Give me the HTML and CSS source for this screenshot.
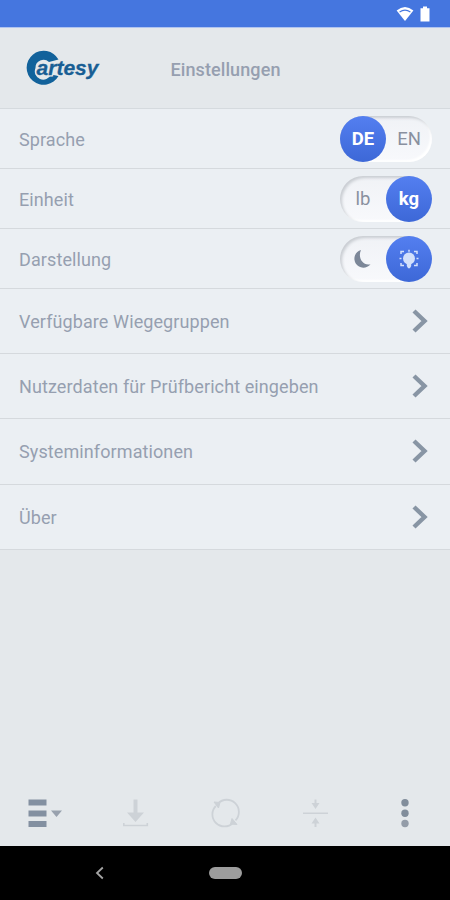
FILE: index.html
```html
<!DOCTYPE html>
<html lang="de">
<head>
<meta charset="utf-8">
<title>Einstellungen</title>
<link rel="stylesheet" href="styles.css">
</head>
<body>
<div class="status">
  <svg width="18" height="16" viewBox="0 0 18 16"><path d="M0.6 4.6Q9-2.4 17.4 4.6L9 15Z" fill="#fff"/><path d="M3.6 5.9Q9 2.4 14.4 5.9" fill="none" stroke="#4576df" stroke-width="1.2"/></svg>
  <svg width="10" height="16" viewBox="0 0 10 16"><path d="M3 0.5h4v1.7h2.5v13.3h-9V2.2H3z" fill="#fff"/></svg>
</div>
<header class="header">
  <div class="logo">
    <svg width="80" height="40" viewBox="0 0 80 40">
      <path d="M33.500 11.500A17 17 0 1 0 33.500 28L26 26.500A8 8 0 0 1 10.500 20A8 8 0 0 1 24 14Z" fill="#12629b"/>
      <text class="halo" x="11.500" y="26.500" textLength="62" lengthAdjust="spacingAndGlyphs">artesy</text>
      <text class="brand" x="11.500" y="26.500" textLength="62" lengthAdjust="spacingAndGlyphs">artesy</text>
    </svg>
  </div>
  <h1 class="title">Einstellungen</h1>
</header>
<main class="list">
  <div class="row toggle-row"><span class="label">Sprache</span>
    <div class="toggle"><span class="option on">DE</span><span class="option">EN</span></div></div>
  <div class="row toggle-row"><span class="label">Einheit</span>
    <div class="toggle"><span class="option">lb</span><span class="option on">kg</span></div></div>
  <div class="row toggle-row"><span class="label">Darstellung</span>
    <div class="toggle"><span class="option"><svg width="20" height="20" viewBox="0 0 20 20"><path d="M8 1A9 9 0 1 0 17.500 15.200C9.500 17 4.500 8.500 8 1Z" fill="#7c8798"/></svg></span>
    <span class="option on"><svg width="22" height="22" viewBox="0 0 22 22"><circle cx="11" cy="10.500" r="6" fill="#d3e0fb"/><path d="M8.800 15h4.400v3l-1.300 2.200h-1.800L8.800 18z" fill="#d3e0fb"/><path class="rays" d="M11 1.800v2M1.500 10.500h2M18.500 10.500h2M3 6V3.500h3M19 6V3.500h-3M3 15v2.500h3M19 15v2.500h-3"/></svg></span></div></div>
  <div class="row link-row"><span class="label">Verfügbare Wiegegruppen</span><svg class="chevron" viewBox="0 0 16 24"><path d="M2 2l10.500 10L2 22"/></svg></div>
  <div class="row link-row"><span class="label">Nutzerdaten für Prüfbericht eingeben</span><svg class="chevron" viewBox="0 0 16 24"><path d="M2 2l10.500 10L2 22"/></svg></div>
  <div class="row link-row"><span class="label">Systeminformationen</span><svg class="chevron" viewBox="0 0 16 24"><path d="M2 2l10.500 10L2 22"/></svg></div>
  <div class="row link-row"><span class="label">Über</span><svg class="chevron" viewBox="0 0 16 24"><path d="M2 2l10.500 10L2 22"/></svg></div>
</main>
<footer class="tools">
  <div class="tool"><svg width="36" height="30" viewBox="0 0 36 30"><path d="M1.500 1.500h18v6h-18zM1.500 12.500h18v6h-18zM1.500 23h18v6h-18z" fill="#8390a1"/><path d="M24 12.500h11l-5.500 6.500z" fill="#98a1ae"/></svg></div>
  <div class="tool"><svg width="28" height="30" viewBox="0 0 28 30"><path d="M12.500 1.500h4v13h6.500L14.500 24 6 14.500h6.500z" fill="#cdd2d7"/><path d="M2.800 25v2.500h23.500V25" fill="none" stroke="#cdd2d7" stroke-width="1.600"/></svg></div>
  <div class="tool"><svg width="30" height="30" viewBox="0 0 30 30" fill="none" stroke="#cdd2d7" stroke-width="1.800"><path d="M8 5.500A12 12 0 0 1 25.500 22.300M23 24.800A12 12 0 0 1 5.800 8"/><path d="M4 4l6 .5-1.500 5.500zM27 26.500l-6.500-.5 1.500-5.500z" fill="#cdd2d7" stroke-width="1"/></svg></div>
  <div class="tool"><svg width="28" height="30" viewBox="0 0 28 30" fill="#cdd2d7"><path d="M2 14.500h25v1.500H2zM13.500 1.500h2v3.500h3L14.500 11l-4-6h3zM13.500 29h2v-3.500h3l-4-6-4 6h3z"/></svg></div>
  <div class="tool"><svg width="10" height="30" viewBox="0 0 10 30" fill="#818d9b"><circle cx="5" cy="4.800" r="3.700"/><circle cx="5" cy="15.200" r="3.700"/><circle cx="5" cy="25.500" r="3.700" fill="#939ca8"/></svg></div>
</footer>
<nav class="system">
  <div class="back"><svg width="10" height="14" viewBox="0 0 10 14"><path d="M7.800 1.500L2 7l5.800 5.500" fill="none" stroke="#a5a5a5" stroke-width="1.800"/></svg></div>
  <div class="home"></div>
</nav>
</body>
</html>
```
FILE: styles.css
```css
* { box-sizing: border-box; }
body {
  margin: 0;
  width: 450px;
  height: 900px;
  overflow: hidden;
  display: flex;
  flex-direction: column;
  background: #e4e8eb;
  font-family: Roboto, "Liberation Sans", sans-serif;
  color: #969fb0;
}
svg { display: block; flex: none; }
.status {
  height: 28px;
  flex: none;
  display: flex;
  justify-content: flex-end;
  gap: 6px;
  padding: 6px 20px 0 0;
  background: #4576df;
  border-bottom: 1px solid #b0c4f0;
}
.header {
  height: 81px;
  flex: none;
  display: grid;
  grid-template-columns: 150px 150px 150px;
  align-items: center;
  border-bottom: 1px solid #d5dade;
}
.logo { padding-left: 26px; }
.logo svg { margin-left: -1px; }
.halo, .brand {
  font: italic bold 21px "Liberation Sans", sans-serif;
}
.halo { fill: #e4e8eb; stroke: #e4e8eb; stroke-width: 3px; }
.brand { fill: #185e94; stroke: #185e94; stroke-width: 0.3px; }
.title {
  margin: 2px 0 0 1px;
  font-size: 18px;
  font-weight: 500;
  letter-spacing: 0.1px;
  text-align: center;
  white-space: nowrap;
}
.list { background: #ebeff3; flex: none; }
.row {
  display: flex;
  align-items: center;
  justify-content: space-between;
  padding: 0 18px 0 19px;
  border-bottom: 1px solid #d5d9dd;
}
.toggle-row { height: 60px; }
.link-row { height: 65.2px; padding-right: 22px; }
.label { font-size: 18px; letter-spacing: 0.1px; padding-top: 1px; }
.toggle {
  width: 92px;
  height: 46px;
  display: flex;
  border-radius: 23px;
  background: linear-gradient(#f0f2f6, #f8f9fc);
  box-shadow: inset 2px 2px 3px #c9cdd2, inset -2px -2px 2px #fff;
}
.option {
  width: 46px;
  height: 46px;
  display: flex;
  align-items: center;
  justify-content: center;
  border-radius: 50%;
  color: #89909f;
  font-size: 18.5px;
  padding-top: 1px;
}
.on {
  background: linear-gradient(#547ff0, #3d68d7);
  color: #fff;
  font-weight: 700;
}
.rays { fill: none; stroke: #d3e0fb; stroke-width: 1.5; }
.chevron {
  width: 16px;
  height: 24px;
  fill: none;
  stroke: #8895a4;
  stroke-width: 4.4;
}
.tools {
  height: 66px;
  flex: none;
  margin-top: auto;
  display: grid;
  grid-template-columns: repeat(5, 90px);
  align-items: center;
}
.tool { display: flex; justify-content: center; }
.system {
  height: 54px;
  flex: none;
  display: grid;
  grid-template-columns: 200px 50px 200px;
  align-items: center;
  justify-items: center;
  background: #000;
}
.home { width: 33px; height: 12px; border-radius: 6px; background: #9d9d9d; }
```
